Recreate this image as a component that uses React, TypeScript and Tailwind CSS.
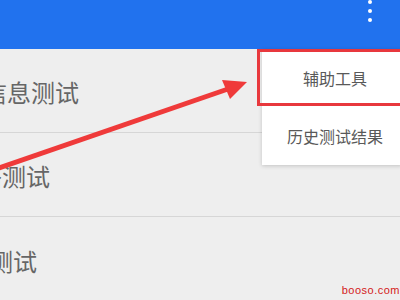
import React from 'react';

const rows = [
    { label: '信息测试', offset: '-ml-[17px]' },
    { label: '网络测试', offset: '-ml-[46px]' },
    { label: '声音测试', offset: '-ml-[59px]' },
];

export default function App() {
    return (
        <div
            className="relative w-[400px] h-[300px] overflow-hidden bg-[#eeeeee]"
            style={{ fontFamily: '"Noto Sans CJK SC", "Noto Sans", sans-serif' }}
        >
            {/* Toolbar */}
            <div className="relative h-[49px] bg-[#2172ee]">
                <div className="absolute left-[368px] top-0 flex flex-col gap-[5px]">
                    <span className="h-[4px] w-[4px] rounded-full bg-white" />
                    <span className="h-[4px] w-[4px] rounded-full bg-white" />
                    <span className="h-[4px] w-[4px] rounded-full bg-white" />
                </div>
            </div>

            {/* List */}
            <div className="flex flex-col">
                {rows.map((row, i) => (
                    <div
                        key={row.label}
                        className={`flex h-[84px] items-center pt-[3px] ${i < rows.length - 1 ? 'border-b border-[#d6d6d6]' : ''}`}
                    >
                        <span className={`${row.offset} whitespace-nowrap text-[24px] leading-none text-[#666666]`}>
                            {row.label}
                        </span>
                    </div>
                ))}
            </div>

            {/* Overflow menu */}
            <div className="absolute left-[262px] top-[49px] flex h-[116px] w-[140px] flex-col bg-white shadow-[0_1px_4px_rgba(0,0,0,0.18)]">
                <div className="flex h-[57px] items-center justify-center pl-[6px] text-[16px] text-[#595959]">辅助工具</div>
                <div className="flex h-[59px] items-center justify-center pl-[6px] text-[16px] text-[#595959]">历史测试结果</div>
            </div>

            {/* Annotation */}
            <div className="absolute left-[257px] top-[49px] h-[57px] w-[146px] border-[3px] border-[#e8383d]" />
            <svg className="absolute left-0 top-0" width="400" height="300" viewBox="0 0 400 300">
                <line x1="-10" y1="171" x2="228" y2="89" stroke="#ef3a3a" strokeWidth="5" />
                <polygon points="247,82 222,80 230,99" fill="#ef3a3a" />
            </svg>

            {/* Watermark */}
            <div
                className="absolute right-0 top-[285px] text-[11px] leading-none tracking-[0.5px] text-[#d41a1a]"
                style={{ fontFamily: '"Liberation Sans", sans-serif' }}
            >
                booso.com
            </div>
        </div>
    );
}
